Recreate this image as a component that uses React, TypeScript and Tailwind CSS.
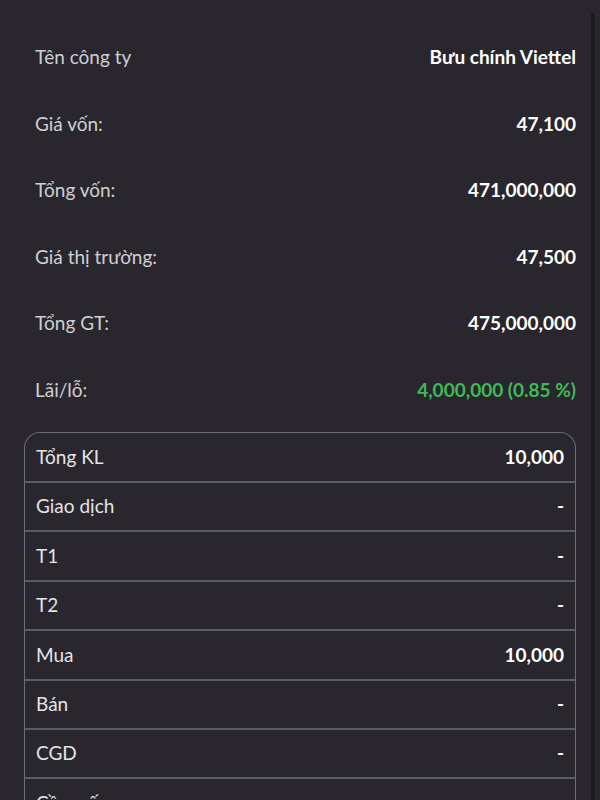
const summary = [
  { label: "Tên công ty", value: "Bưu chính Viettel" },
  { label: "Giá vốn:", value: "47,100" },
  { label: "Tổng vốn:", value: "471,000,000" },
  { label: "Giá thị trường:", value: "47,500" },
  { label: "Tổng GT:", value: "475,000,000" },
  { label: "Lãi/lỗ:", value: "4,000,000 (0.85 %)", up: true },
]

const volumes = [
  { label: "Tổng KL", value: "10,000" },
  { label: "Giao dịch", value: "-" },
  { label: "T1", value: "-" },
  { label: "T2", value: "-" },
  { label: "Mua", value: "10,000" },
  { label: "Bán", value: "-" },
  { label: "CGD", value: "-" },
  { label: "Cầm cố", value: "-" },
]

export default function App() {
  return (
    <div className="relative h-[800px] w-[600px] overflow-hidden bg-[#29272d] font-['Lato','Noto_Sans',sans-serif]">
      <div className="absolute right-[5px] top-[13px] bottom-0 w-[4px] bg-[#1c1b20]" />
      <div className="flex flex-col px-6 pt-6">
        {summary.map((row) => (
          <div key={row.label} className="flex h-[66.5px] items-center justify-between pl-[11px] text-[19px]">
            <span className="text-[#cfcfd3]">{row.label}</span>
            <span className={row.up ? "font-bold text-[#3dbb57]" : "font-bold text-white"}>{row.value}</span>
          </div>
        ))}
        <div className="mt-[9px] flex flex-col rounded-[16px] border border-b-0 border-[#6d6c71]">
          {volumes.map((row, i) => (
            <div
              key={row.label}
              className={
                "flex items-center justify-between px-[11px] text-[19px]" +
                (i > 0 ? " h-[49.4px] border-t-2 border-[#5c5b60]" : " h-[48px]")
              }
            >
              <span className="text-[#e4e4e7]">{row.label}</span>
              <span className="font-bold text-white">{row.value}</span>
            </div>
          ))}
        </div>
      </div>
    </div>
  )
}
